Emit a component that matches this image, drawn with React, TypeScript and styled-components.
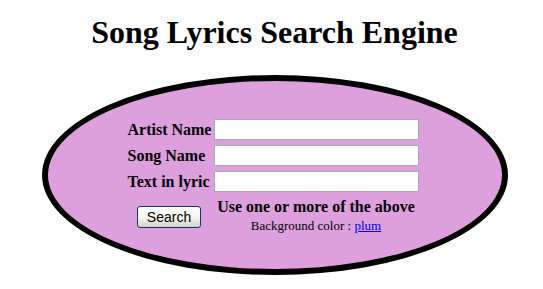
import styled, { createGlobalStyle } from "styled-components";

const GlobalStyle = createGlobalStyle`
    html, body {
        margin: 0;
        padding: 0;
        background: #ffffff;
        font-family: "Liberation Serif", "Times New Roman", serif;
        color: #000000;
    }
`;

export default function App() {
    return (
        <>
            <GlobalStyle />
            <Page>
                <Title>Song Lyrics Search Engine</Title>
                <Oval>
                    <SearchForm onSubmit={(e) => e.preventDefault()}>
                        <Label htmlFor="artist">Artist Name</Label>
                        <TextInput id="artist" type="text" />
                        <Label htmlFor="song">Song Name</Label>
                        <TextInput id="song" type="text" />
                        <Label htmlFor="lyric">Text in lyric</Label>
                        <TextInput id="lyric" type="text" />
                        <ButtonCell>
                            <SearchButton type="submit">Search</SearchButton>
                        </ButtonCell>
                        <HintCell>
                            <Hint>Use one or more of the above</Hint>
                            <ColorNote>
                                Background color : <a href="#">plum</a>
                            </ColorNote>
                        </HintCell>
                    </SearchForm>
                </Oval>
            </Page>
        </>
    );
}

const Page = styled.div`
    width: 543px;
    padding: 14px 0 0 6px;
    box-sizing: border-box;
`;

const Title = styled.h1`
    margin: 0 0 24px;
    text-align: center;
    font-size: 32px;
    font-weight: bold;
    line-height: 37px;
`;

const Oval = styled.div`
    width: 466px;
    height: 200px;
    margin: 0 auto;
    box-sizing: border-box;
    border: 6px solid #000000;
    border-radius: 50%;
    background: plum;
    padding-top: 38px;
    display: flex;
    justify-content: center;
`;

const SearchForm = styled.form`
    display: grid;
    grid-template-columns: 83px 205px;
    column-gap: 3px;
    row-gap: 5px;
    align-items: center;
    align-content: start;
    margin-left: -3px;
`;

const Label = styled.label`
    font-size: 16px;
    font-weight: bold;
    line-height: 18px;
    white-space: nowrap;
`;

const TextInput = styled.input`
    width: 205px;
    height: 21px;
    box-sizing: border-box;
    border: 1px solid #a5acb2;
    background: #ffffff;
    padding: 1px 3px;
    font-family: "Liberation Sans", Arial, sans-serif;
    font-size: 13px;
    outline: none;
`;

const ButtonCell = styled.div`
    display: flex;
    justify-content: center;
    padding-top: 3px;
`;

const SearchButton = styled.button`
    width: 64px;
    height: 22px;
    padding: 0;
    border: 1px solid #003c74;
    border-radius: 3px;
    background: linear-gradient(#ffffff 0%, #f4f4f0 55%, #d6d0c5 100%);
    font-family: "Liberation Sans", Arial, sans-serif;
    font-size: 14px;
    color: #000000;
    line-height: 20px;
`;

const HintCell = styled.div`
    text-align: center;
    padding-top: 1px;
`;

const Hint = styled.div`
    font-size: 16px;
    font-weight: bold;
    line-height: 18px;
`;

const ColorNote = styled.div`
    margin-top: 2px;
    font-size: 13px;
    line-height: 15px;

    a {
        color: #0000ee;
        text-decoration: underline;
    }
`;
